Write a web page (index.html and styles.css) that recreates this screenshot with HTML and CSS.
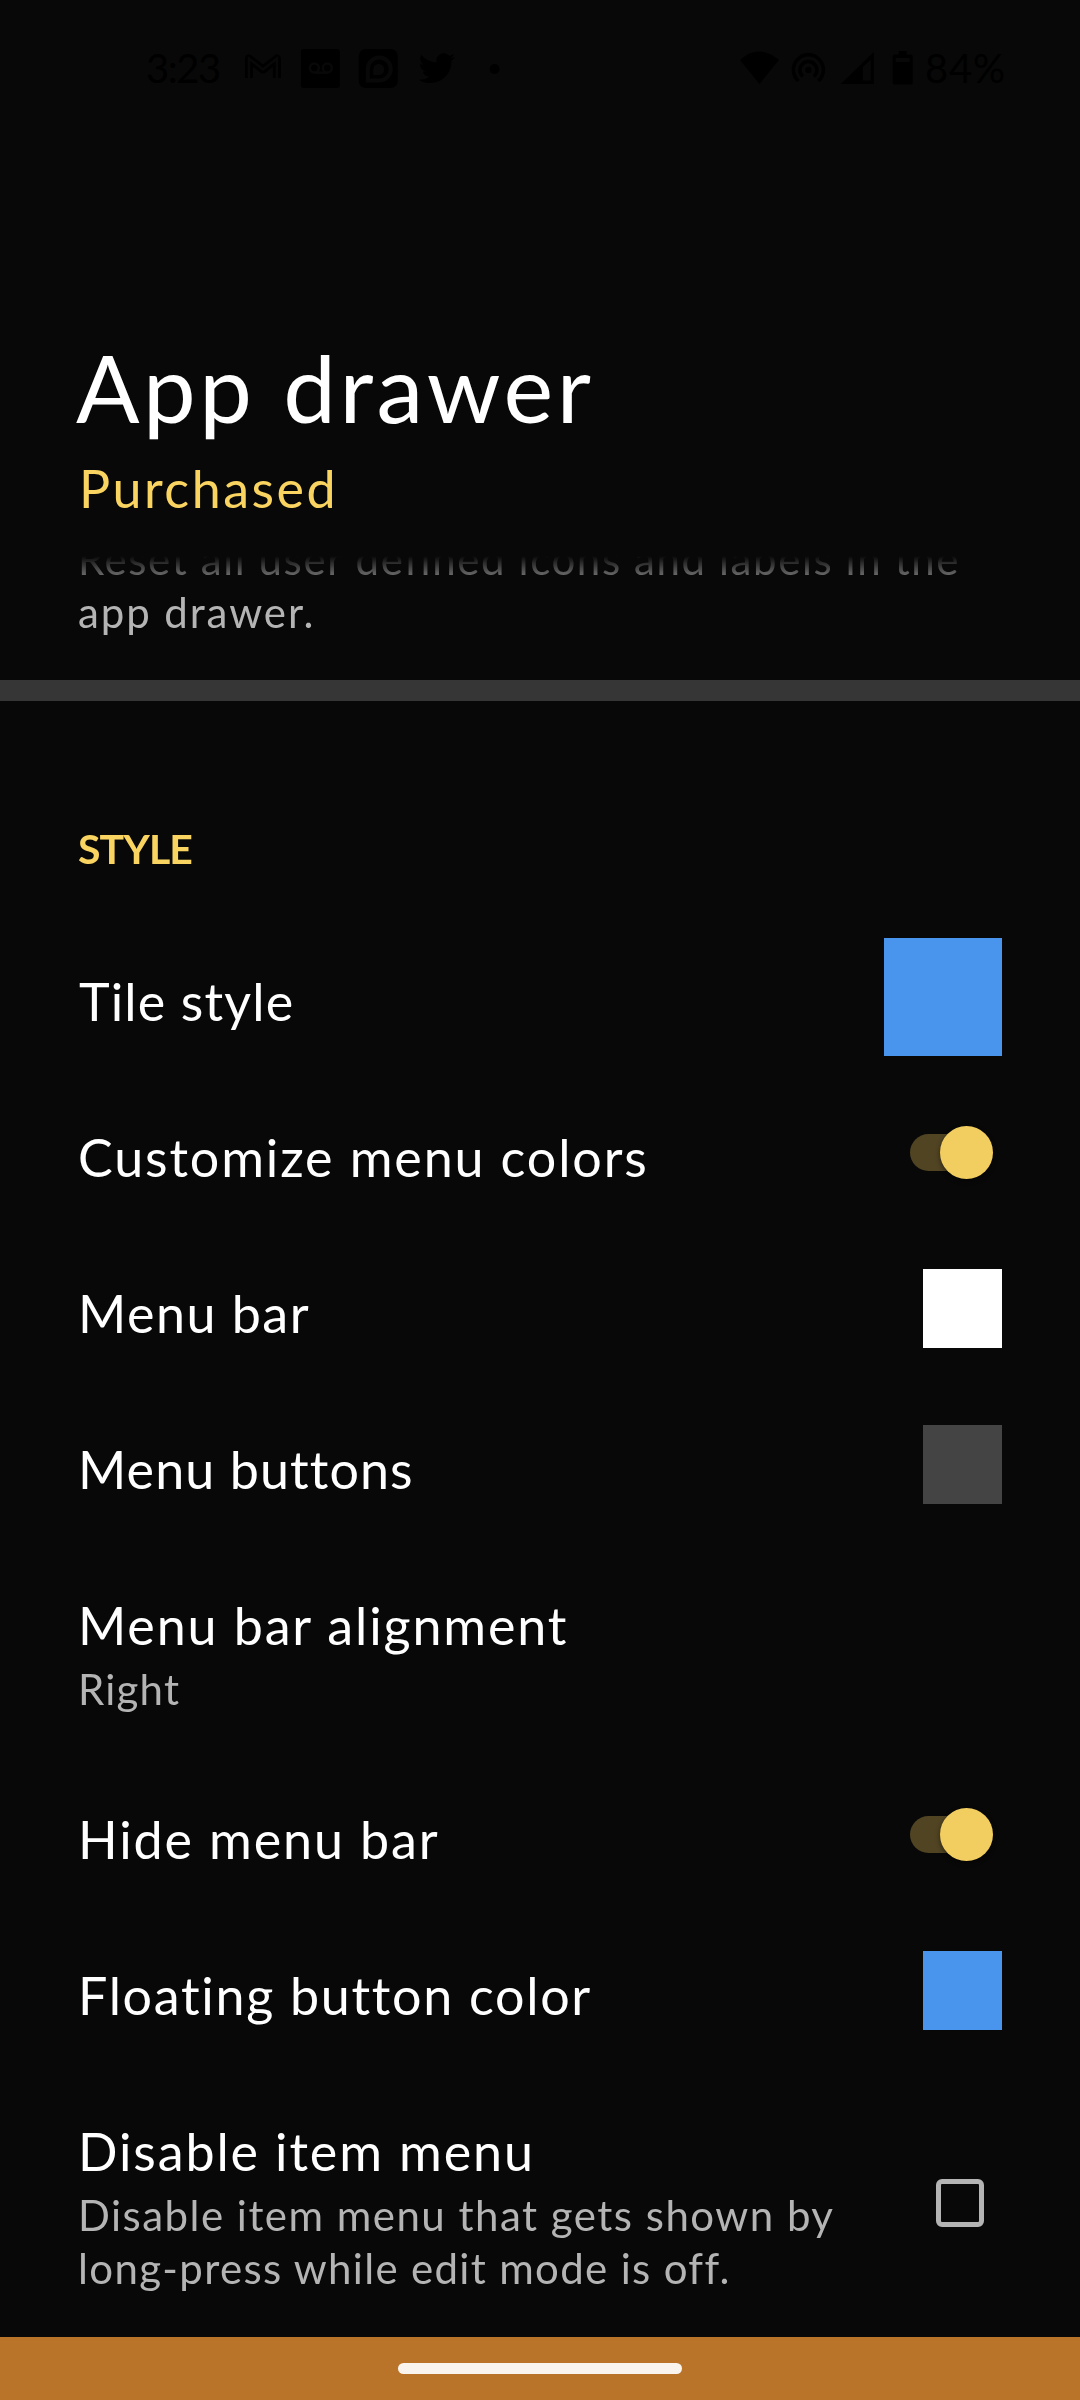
FILE: index.html
```html
<!DOCTYPE html>
<html lang="en">
<head>
<meta charset="utf-8">
<title>App drawer</title>
<link rel="stylesheet" href="styles.css">
</head>
<body>
<div class="screen">
  <div class="status">
    <span class="clock">3:23</span>
    <svg class="notifications" width="262" height="44" viewBox="240 46 262 44">
      <path d="M249 78V58.500L263 69.500L277 58.500V78" fill="none" stroke="#000" stroke-width="8" stroke-linejoin="round"/>
      <path d="M249 79V58.500L263 69.500L277 58.500V79" fill="none" stroke="#080808" stroke-width="2.500"/>
      <rect x="301" y="49" width="39" height="39" rx="3" fill="#000"/>
      <g fill="none" stroke="#080808" stroke-width="2.5"><circle cx="314.500" cy="68" r="4.500"/><circle cx="327.500" cy="68" r="4.500"/><path d="M314 72.700H328"/></g>
      <rect x="359" y="49" width="39" height="39" rx="7" fill="#000"/>
      <path d="M368 80.500V69a11.500 11.500 0 1 1 11.500 11.500Z" fill="none" stroke="#080808" stroke-width="4"/>
      <path d="M373.500 75V69a5.500 5.500 0 1 1 5.500 6Z" fill="#080808"/>
      <path transform="translate(419 50) scale(1.52)" d="M23.950 4.570a10 10 0 0 1-2.820.770 4.960 4.960 0 0 0 2.160-2.720c-.950.560-2 .960-3.130 1.180a4.920 4.920 0 0 0-8.380 4.480C7.690 8.090 4.070 6.130 1.640 3.160a4.920 4.920 0 0 0 1.520 6.570 4.900 4.900 0 0 1-2.230-.610v.060a4.920 4.920 0 0 0 3.950 4.830 5 5 0 0 1-2.210.080 4.940 4.940 0 0 0 4.600 3.420A9.870 9.870 0 0 1 0 19.540a13.990 13.990 0 0 0 7.550 2.210c9.050 0 14-7.500 14-13.980 0-.210 0-.420-.020-.630a9.940 9.940 0 0 0 2.420-2.570Z"/>
      <circle cx="495" cy="69" r="5"/>
    </svg>
    <svg class="system" width="176" height="44" viewBox="740 46 176 44">
      <path d="M741 60Q760 43 780 60L760.500 84Z"/>
      <g fill="none" stroke="#000" stroke-width="3.5"><path d="M799.500 81A15 15 0 1 1 819.500 81"/><path d="M804 76.500A8.500 8.500 0 1 1 815 76.500"/></g>
      <circle cx="809.500" cy="70" r="3.200"/>
      <path fill-rule="evenodd" d="M842 84L875 52V84ZM864 67V80.500H872V59.500Z"/>
      <path fill-rule="evenodd" d="M900 51h8v3.500h4a2 2 0 0 1 2 2v26a2 2 0 0 1-2 2h-16a2 2 0 0 1-2-2v-26a2 2 0 0 1 2-2h4ZM897 58v4h14v-4Z"/>
    </svg>
    <span class="battery">84%</span>
  </div>

  <header class="header">
    <h1 class="title">App drawer</h1>
    <p class="license">Purchased</p>
  </header>

  <main class="list">
    <p class="reset">Reset all user defined icons and labels in the<br><span class="reset-end">app drawer.</span></p>
    <div class="divider"></div>
    <h2 class="section">STYLE</h2>

    <div class="row">
      <div class="label tile-style">Tile style</div>
      <div class="swatch large blue"></div>
    </div>
    <div class="row">
      <div class="label customize">Customize menu colors</div>
      <div class="switch"><div class="thumb"></div></div>
    </div>
    <div class="row">
      <div class="label menu-bar">Menu bar</div>
      <div class="swatch white"></div>
    </div>
    <div class="row">
      <div class="label menu-buttons">Menu buttons</div>
      <div class="swatch gray"></div>
    </div>
    <div class="row two-line">
      <div class="texts">
        <div class="label">Menu bar alignment</div>
        <p class="summary value">Right</p>
      </div>
    </div>
    <div class="row">
      <div class="label">Hide menu bar</div>
      <div class="switch"><div class="thumb"></div></div>
    </div>
    <div class="row">
      <div class="label floating">Floating button color</div>
      <div class="swatch blue"></div>
    </div>
    <div class="row three-line">
      <div class="texts">
        <div class="label">Disable item menu</div>
        <p class="summary">Disable item menu that gets shown by<br><span class="summary-end">long-press while edit mode is off.</span></p>
      </div>
      <div class="checkbox"></div>
    </div>
  </main>

  <nav class="navbar"><div class="pill"></div></nav>
</div>
</body>
</html>
```
FILE: styles.css
```css
* {
  box-sizing: border-box;
}

body {
  margin: 0;
  background: #080808;
  color: #fff;
  font-family: Lato, "Open Sans", sans-serif;
}

h1, h2, p {
  margin: 0;
  font-weight: 400;
}

.screen {
  display: flex;
  flex-direction: column;
  width: 1080px;
  height: 2400px;
  overflow: hidden;
}

/* Status bar */
.status {
  display: flex;
  align-items: center;
  height: 136px;
  padding: 0 74px 0 146px;
  color: #000;
  font-size: 40px;
  line-height: 48px;
  white-space: nowrap;
}

.clock {
  width: 94px;
  letter-spacing: -1.470px;
}

.system {
  margin-left: 238px;
}

.battery {
  margin-left: 10px;
  letter-spacing: 0.800px;
}

/* Header */
.header {
  height: 420px;
  padding: 202px 76px 0;
}

.title {
  font-size: 94px;
  line-height: 98px;
  letter-spacing: 3.600px;
}

.license {
  margin: 19px 0 0 3px;
  color: #fad460;
  font-size: 52px;
  line-height: 66px;
  letter-spacing: 2.500px;
}

/* Settings list */
.list {
  height: 1781px;
  overflow: hidden;
  -webkit-mask-image: linear-gradient(transparent, #000 34px);
  mask-image: linear-gradient(transparent, #000 34px);
}

.reset {
  margin-top: -23px;
  padding: 0 0 42px 78px;
  color: #b4b4b4;
  font-size: 42px;
  line-height: 52.500px;
  letter-spacing: 1.600px;
  white-space: nowrap;
}

.reset-end {
  letter-spacing: 1.900px;
}

.divider {
  height: 21px;
  background: #363636;
}

.section {
  height: 218px;
  padding: 123px 0 0 78px;
  color: #fad460;
  font-size: 41px;
  font-weight: 700;
  line-height: 50px;
  letter-spacing: -0.900px;
}

.row {
  display: flex;
  align-items: center;
  justify-content: space-between;
  height: 156px;
  padding: 0 78px;
}

.label {
  align-self: flex-start;
  padding-top: 49px;
  font-size: 52px;
  line-height: 66px;
  letter-spacing: 1.880px;
  white-space: nowrap;
}

.tile-style {
  margin-left: 1px;
  letter-spacing: 1.150px;
}

.menu-bar {
  letter-spacing: 1.500px;
}

.menu-buttons {
  letter-spacing: 1.100px;
}

.floating {
  letter-spacing: 1.700px;
}

.texts {
  align-self: flex-start;
}

.summary {
  margin-top: 5px;
  color: #b4b4b4;
  font-size: 42px;
  line-height: 52.500px;
  letter-spacing: 1.480px;
  white-space: nowrap;
}

.summary-end {
  letter-spacing: 1.330px;
}

.value {
  letter-spacing: 1.200px;
}

.two-line {
  height: 214px;
}

.three-line {
  height: 268px;
}

.swatch {
  width: 79px;
  height: 79px;
  margin-bottom: 1px;
}

.large {
  width: 118px;
  height: 118px;
  margin-bottom: 0;
}

.blue {
  background: #4994ec;
}

.white {
  background: #fff;
}

.gray {
  background: #444;
}

.switch {
  display: flex;
  align-items: center;
  justify-content: flex-end;
  width: 80px;
  height: 37px;
  margin: 0 12px 1px 0;
  border-radius: 19px;
  background: #504423;
}

.thumb {
  width: 53px;
  height: 53px;
  margin-right: -3px;
  flex: none;
  border-radius: 50%;
  background: #f2cd60;
  box-shadow: 0 2px 5px rgba(0, 0, 0, 0.45);
}

.checkbox {
  width: 48px;
  height: 48px;
  margin-right: 18px;
  border: 5px solid #b4b4b4;
  border-radius: 6px;
}

/* Gesture navigation */
.navbar {
  display: flex;
  justify-content: center;
  height: 63px;
  padding-top: 26px;
  background: #ba742a;
}

.pill {
  width: 284px;
  height: 11px;
  border-radius: 6px;
  background: #faf4ee;
}
```
